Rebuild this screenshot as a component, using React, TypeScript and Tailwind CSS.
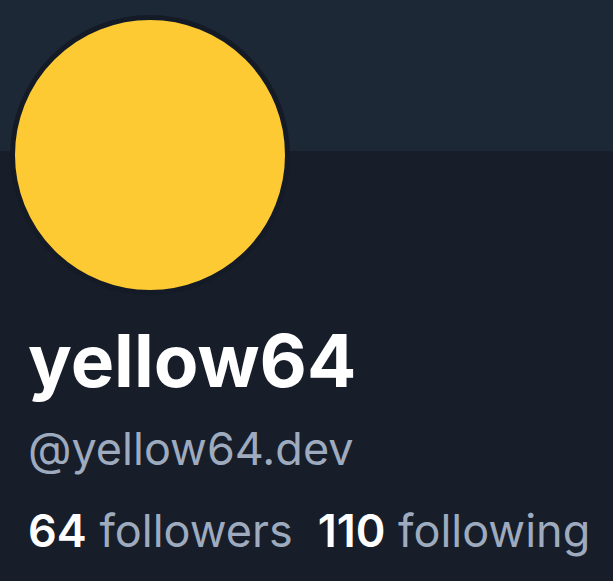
export default function App() {
  return (
    <main
      className="h-[581px] w-[613px] overflow-hidden bg-[#171e2a]"
      style={{ fontFamily: "Inter, 'Noto Sans', sans-serif" }}
    >
      <div className="h-[151px] bg-[#1d2837]" />
      <div className="px-[28px]">
        <div className="-mt-[136px] -ml-[18px] h-[280px] w-[280px] rounded-full border-[5px] border-[#141b26] bg-[#fdca33]" />
        <h1 className="mt-[29px] text-[73px] font-bold leading-none text-white">
          yellow64
        </h1>
        <p className="mt-[29px] text-[45px] leading-none text-[#9eabbf]">
          @yellow64.dev
        </p>
        <div className="mt-[37px] flex gap-[25px] whitespace-nowrap text-[45px] leading-none">
          <span className="shrink-0">
            <span className="font-semibold text-white">64</span>{" "}
            <span className="text-[#9eabbf]">followers</span>
          </span>
          <span className="shrink-0">
            <span className="font-semibold text-white">110</span>{" "}
            <span className="text-[#9eabbf]">following</span>
          </span>
        </div>
      </div>
    </main>
  );
}
